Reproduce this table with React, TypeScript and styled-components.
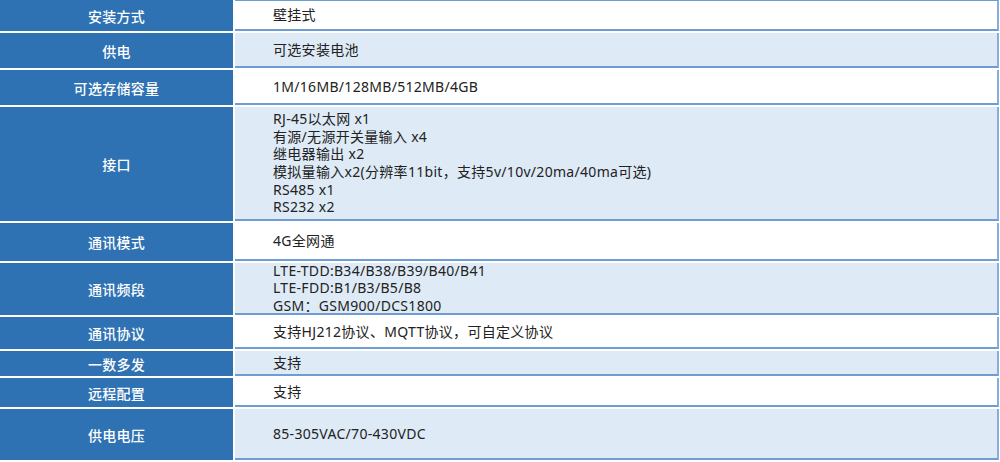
import styled, { createGlobalStyle } from 'styled-components';
import { FC } from 'react';

interface SpecRow {
  label: string;
  lines: string[];
  height: number;
}

const ROWS: SpecRow[] = [
  { label: '安装方式', lines: ['壁挂式'], height: 31 },
  { label: '供电', lines: ['可选安装电池'], height: 35 },
  { label: '可选存储容量', lines: ['1M/16MB/128MB/512MB/4GB'], height: 35 },
  {
    label: '接口',
    lines: [
      'RJ-45以太网 x1',
      '有源/无源开关量输入 x4',
      '继电器输出 x2',
      '模拟量输入x2(分辨率11bit，支持5v/10v/20ma/40ma可选)',
      'RS485 x1',
      'RS232 x2',
    ],
    height: 114,
  },
  { label: '通讯模式', lines: ['4G全网通'], height: 38 },
  {
    label: '通讯频段',
    lines: ['LTE-TDD:B34/B38/B39/B40/B41', 'LTE-FDD:B1/B3/B5/B8', 'GSM：GSM900/DCS1800'],
    height: 52,
  },
  { label: '通讯协议', lines: ['支持HJ212协议、MQTT协议，可自定义协议'], height: 32 },
  { label: '一数多发', lines: ['支持'], height: 25 },
  { label: '远程配置', lines: ['支持'], height: 29 },
  { label: '供电电压', lines: ['85-305VAC/70-430VDC'], height: 51 },
];

const App: FC = () => {
  return (
    <>
      <GlobalStyle />
      <Table>
        {ROWS.map((row, i) => (
          <Row key={row.label} style={{ height: row.height }}>
            <Label>{row.label}</Label>
            <Value $shaded={i % 2 === 1} $first={i === 0}>
              {row.lines.map((line) => (
                <Line key={line}>{line}</Line>
              ))}
            </Value>
          </Row>
        ))}
      </Table>
    </>
  );
};

export default App;

const GlobalStyle = createGlobalStyle`
  body {
    margin: 0;
    background: #fff;
    font-family: "Noto Sans", "Noto Sans CJK SC", sans-serif;
  }
`;

const Table = styled.div`
  width: 1000px;
  display: flex;
  flex-direction: column;
  gap: 2px;
`;

const Row = styled.div`
  display: grid;
  grid-template-columns: 233px 1fr;
  grid-template-rows: minmax(0, 1fr);
  column-gap: 2px;
  padding-right: 1px;
  flex-shrink: 0;
`;

const Label = styled.div`
  background: #2e72b3;
  color: #fff;
  font-size: 14px;
  font-weight: 500;
  letter-spacing: 0.3px;
  display: flex;
  align-items: center;
  justify-content: center;
`;

const Value = styled.div<{ $shaded: boolean; $first: boolean }>`
  background: ${(p) => (p.$shaded ? '#deeaf6' : '#fff')};
  border-top: ${(p) => (p.$first ? '1px solid #6d9dd2' : 'none')};
  border-bottom: 2px solid #6d9dd2;
  border-right: 2px solid #86addb;
  box-sizing: border-box;
  min-height: 0;
  padding-left: 38px;
  display: flex;
  flex-direction: column;
  justify-content: center;
  color: #222;
  font-size: 14px;
  line-height: 17.6px;
  letter-spacing: 0.3px;
`;

const Line = styled.div`
  white-space: nowrap;
  flex-shrink: 0;
`;
